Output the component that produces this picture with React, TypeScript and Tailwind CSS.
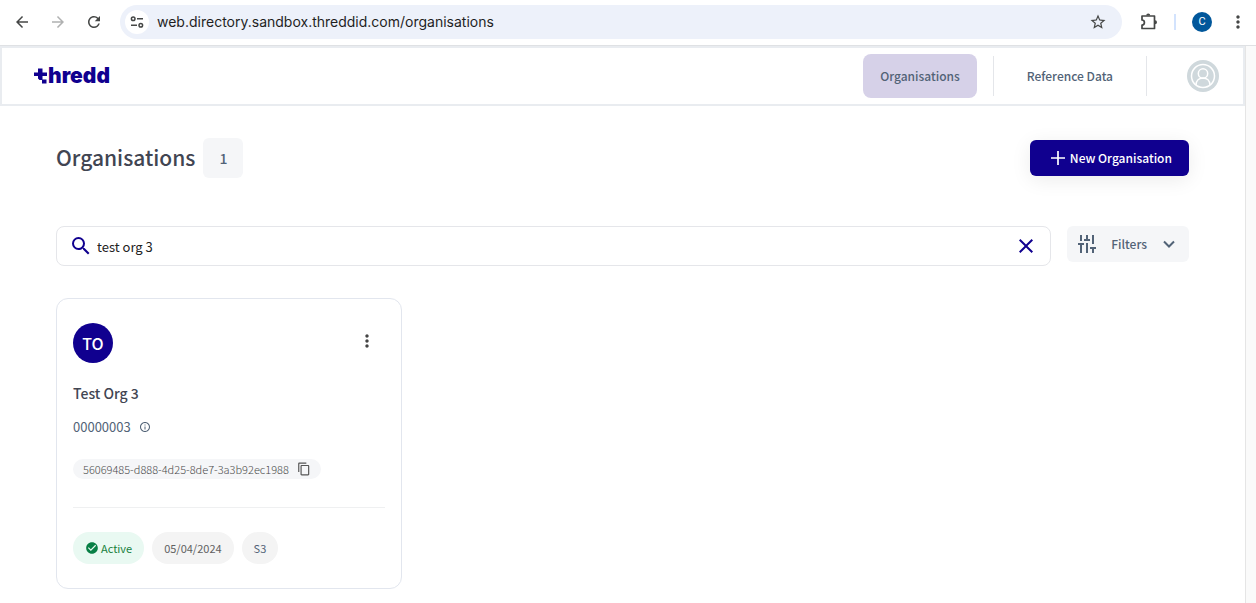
import type { ReactNode } from "react";
import {
  MdArrowBack,
  MdArrowForward,
  MdCheckCircle,
  MdClose,
  MdContentCopy,
  MdInfoOutline,
  MdMoreVert,
  MdRefresh,
  MdSearch,
  MdStarBorder,
} from "react-icons/md";

function SiteSettingsIcon() {
  return (
    <svg viewBox="0 0 14 14" className="size-3.5" fill="none" stroke="currentColor" strokeWidth="1.5">
      <circle cx="3.2" cy="3.8" r="1.8" />
      <path d="M7 3.8h6M1 10.2h6" />
      <circle cx="10.8" cy="10.2" r="1.8" />
    </svg>
  );
}

function ExtensionIcon() {
  return (
    <svg viewBox="0 0 18 18" className="size-[18px]" fill="none" stroke="currentColor" strokeWidth="1.7" strokeLinejoin="round">
      <path d="M2 3h12.500v12.500H2V12c1.400 0 2.400-1 2.400-2.500S3.400 7 2 7z" />
      <path d="M6.200 2.500a2 2 0 0 1 4 0zM15 7.300a2 2 0 0 1 0 4z" fill="currentColor" stroke="none" />
    </svg>
  );
}

function BrowserBar() {
  return (
    <div className="flex h-[45px] items-center bg-white pr-2.5 pb-px pl-3 text-[#454746]">
      <button aria-label="Back" className="flex size-5 items-center justify-center">
        <MdArrowBack className="size-[18px]" />
      </button>
      <button aria-label="Forward" className="ml-4 flex size-5 items-center justify-center text-[#b0b1b1]">
        <MdArrowForward className="size-[18px]" />
      </button>
      <button aria-label="Reload" className="ml-4 flex size-5 items-center justify-center">
        <MdRefresh className="size-[18px]" />
      </button>
      <div className="ml-4 flex h-[34px] min-w-0 flex-1 items-center rounded-full bg-[#edf1fa] pr-[15px] pl-[5px]">
        <button aria-label="Site information" className="flex size-6 shrink-0 items-center justify-center rounded-full bg-white">
          <SiteSettingsIcon />
        </button>
        <input
          aria-label="Address"
          defaultValue="web.directory.sandbox.threddid.com/organisations"
          className="ml-2 min-w-0 flex-1 bg-transparent font-['Inter',sans-serif] text-sm text-[#1f1f1f] outline-none"
        />
        <button aria-label="Bookmark this page">
          <MdStarBorder className="size-[18px]" />
        </button>
      </div>
      <button aria-label="Extensions" className="ml-[18px]">
        <ExtensionIcon />
      </button>
      <span className="ml-4 h-4 w-0.5 bg-[#d3e3fd]" />
      <button
        aria-label="Profile"
        className="ml-4 size-5 rounded-full bg-[#01579b] font-['Roboto',sans-serif] text-[11px] leading-5 text-white"
      >
        C
      </button>
      <button aria-label="Browser menu" className="ml-[18px] flex w-4 items-center justify-center">
        <MdMoreVert className="size-5 shrink-0" />
      </button>
    </div>
  );
}

function Logo() {
  return (
    <a href="#" aria-label="thredd" className="flex h-5 items-center text-[#10008f]">
      <svg viewBox="0 0 14 16" className="h-4 w-3.5" fill="currentColor">
        <path d="M4 .5h4.500v4H13V8H8.500v3.500H12.500V15.500H8V12H5.500L4 10.500V8H0V4.500h4z" />
      </svg>
      <span className="font-['Inter',sans-serif] text-[21px] leading-5 font-black">hredd</span>
    </a>
  );
}

function UserIcon() {
  return (
    <svg viewBox="0 0 32 32" className="size-8" fill="none" stroke="#fff" strokeWidth="1.500">
      <circle cx="16" cy="16" r="16" fill="#cfd8dc" stroke="none" />
      <circle cx="16" cy="16" r="11.500" />
      <circle cx="16" cy="13.500" r="4.700" />
      <path d="M9 25c.2-4.300 3-7 7-7s6.800 2.700 7 7" />
    </svg>
  );
}

function Header() {
  return (
    <header className="flex h-[60px] items-center justify-between border-2 border-[#e9ecf0] bg-white pr-6 pl-8">
      <Logo />
      <nav className="flex items-center text-xs font-medium text-[#526377]">
        <a href="#" className="flex h-11 items-center rounded-lg bg-[#d6d1e8] px-[17px]">
          Organisations
        </a>
        <span className="ml-4 h-10 w-px bg-[#e4e6ea]" />
        <a href="#" className="px-[33px]">
          Reference Data
        </a>
        <span className="h-10 w-px bg-[#e4e6ea]" />
        <button aria-label="Account" className="ml-10">
          <UserIcon />
        </button>
      </nav>
    </header>
  );
}

function FiltersIcon() {
  return (
    <svg viewBox="0 0 20 20" className="size-5" fill="none" stroke="currentColor" strokeWidth="2">
      <path d="M4 1v6M1 10h6M4 10v9M10 1v5M7 6h6M10 9v10M16 1v9M13 14h6M16 14v5" />
    </svg>
  );
}

function Tag({ className, children }: { className: string; children: ReactNode }) {
  return <span className={`flex h-8 items-center rounded-full px-3 text-[11px] ${className}`}>{children}</span>;
}

function OrganisationCard() {
  return (
    <article className="rounded-xl border border-[#e2e6ee] px-4 py-6">
      <div className="flex items-start justify-between">
        <span className="flex size-10 items-center justify-center rounded-full bg-[#10008f] text-base font-medium text-white">
          TO
        </span>
        <button aria-label="Organisation menu" className="mt-2 mr-2 text-[#444]">
          <MdMoreVert className="size-5" />
        </button>
      </div>
      <h2 className="mt-5 text-sm leading-5 font-medium text-[#414552]">Test Org 3</h2>
      <p className="mt-3.5 flex h-5 items-center gap-2 text-[13px] leading-5 text-[#526377]">
        00000003
        <MdInfoOutline className="size-3" />
      </p>
      <p className="mt-[22px] flex h-5 w-fit items-center gap-2 rounded-full bg-[#f5f6f8] px-2.5 text-[11px] leading-5 font-light text-[#4a4a4a]">
        56069485-d888-4d25-8de7-3a3b92ec1988
        <button aria-label="Copy identifier" className="text-[#555]">
          <MdContentCopy className="size-3.5" />
        </button>
      </p>
      <hr className="mt-7 border-[#eff0f1]" />
      <div className="mt-6 flex gap-2">
        <Tag className="gap-0.5 bg-[#e9f9f2] text-[#16803c]">
          <MdCheckCircle className="size-3.5 text-[#087f45]" />
          Active
        </Tag>
        <Tag className="bg-[#f4f4f4] text-[#616161]">05/04/2024</Tag>
        <Tag className="bg-[#f4f4f4] text-[#526377]">S3</Tag>
      </div>
    </article>
  );
}

export default function App() {
  return (
    <div className="flex min-h-screen flex-col overflow-hidden bg-white font-['Noto_Sans_CJK_SC',sans-serif]">
      <BrowserBar />
      <div className="flex flex-1 border-t border-[#dfe1e4]">
        <div className="min-w-0 flex-1">
          <Header />
          <main className="px-14 pt-8">
            <div className="flex items-center justify-between">
              <div className="flex items-center gap-2">
                <h1 className="mb-0.5 text-[21px] leading-8 font-medium text-[#414552]">Organisations</h1>
                <span className="flex size-10 items-center justify-center rounded-md bg-[#f5f6f8] text-sm font-medium text-[#526377]">
                  1
                </span>
              </div>
              <button className="flex h-9 items-center gap-1 rounded-md bg-[#10008f] pr-[17px] pl-5 text-xs font-medium text-white shadow-[0_4px_20px_rgba(0,0,0,0.08)]">
                <svg viewBox="0 0 16 16" className="size-4" stroke="currentColor" strokeWidth="1.700">
                  <path d="M8 1v14M1 8h14" />
                </svg>
                New Organisation
              </button>
            </div>
            <div className="mt-12 flex items-start gap-4">
              <label className="flex h-10 min-w-0 flex-1 items-center rounded-lg border border-[#e5e6ea] px-3 text-[#10008f]">
                <MdSearch className="size-6 shrink-0" />
                <input
                  aria-label="Search organisations"
                  defaultValue="test org 3"
                  className="ml-1 min-w-0 flex-1 bg-transparent pt-0.5 text-[13px] text-[#222] outline-none"
                />
                <button aria-label="Clear search">
                  <MdClose className="size-6" />
                </button>
              </label>
              <button className="flex h-9 items-center rounded-md bg-[#f5f6f8] px-2.5 text-xs font-medium text-[#526377]">
                <FiltersIcon />
                <span className="ml-3.5">Filters</span>
                <svg viewBox="0 0 12 12" className="mr-1 ml-4 size-3" fill="none" stroke="currentColor" strokeWidth="2">
                  <path d="M1 3.500 6 8.500l5-5" />
                </svg>
              </button>
            </div>
            <section aria-label="Results" className="mt-8 grid grid-cols-3 gap-12">
              <OrganisationCard />
            </section>
          </main>
        </div>
        <div className="w-[11px] border-l border-[#e5e5e5] bg-[#fafafa]" />
      </div>
    </div>
  );
}
